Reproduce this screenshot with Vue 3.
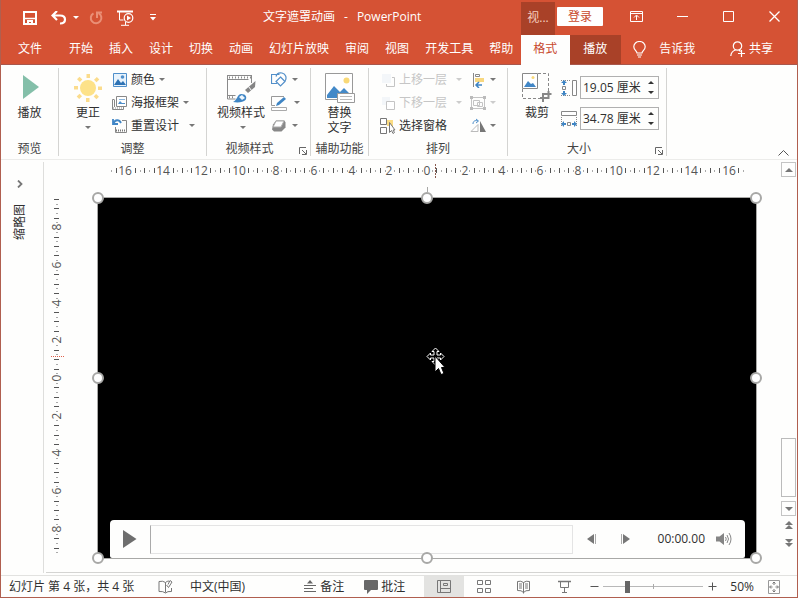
<script setup>
import { ref } from 'vue'

const tabs = ['开始', '插入', '设计', '切换', '动画', '幻灯片放映', '审阅', '视图', '开发工具', '帮助']
const height = ref('19.05 厘米')
const width = ref('34.78 厘米')
const zoom = ref(23)

const UNIT = 18.85

// Half-unit marks are tall, quarter-unit marks are dots; marks under a number are left out.
function ticks(from, to, lastNumber) {
  const list = []
  for (let q = from * 4; q <= to * 4; q++) {
    const value = q / 4
    const number = Math.abs(Math.round(value / 2) * 2)
    const gap = Math.abs(Math.abs(value) - number)
    const covered = number >= 10 ? 0.3 : 0.2
    if (number <= lastNumber && gap < covered) continue
    list.push({ at: Math.round(value * UNIT), tall: q % 2 === 0 })
  }
  return list
}

function numbers(limit) {
  const list = []
  for (let n = -limit; n <= limit; n += 2) list.push({ at: Math.round(n * UNIT), text: Math.abs(n) })
  return list
}

const hTicks = ticks(-16.75, 16.75, 16)
const hNumbers = numbers(16)
const vTicks = ticks(-9.5, 9.25, 8)
const vNumbers = numbers(8)
const handles = ['nw', 'n', 'ne', 'w', 'e', 'sw', 's', 'se']
const rays = [0, 45, 90, 135, 180, 225, 270, 315]
</script>

<template>
  <div class="window">
    <header class="titlebar">
      <div class="quick">
        <button class="q save" aria-label="保存">
          <svg width="14" height="14" viewBox="0 0 14 14"><path d="M1 1h12v12H1z" fill="none" stroke="#fff" stroke-width="2" /><path d="M2 7.500h10" stroke="#fff" stroke-width="1.500" /><path d="M4 9h6v4H8v-2H6v2H4z" fill="#fff" /></svg>
        </button>
        <button class="q undo" aria-label="撤消">
          <svg width="16" height="14" viewBox="0 0 16 14"><path d="M6 0 1.500 4.500 6 9M2 4.500h7c3 0 5 1.500 5 4s-2 4-5 4" fill="none" stroke="#fff" stroke-width="2.200" /></svg>
          <i class="caret light"></i>
        </button>
        <button class="q redo" aria-label="重复">
          <svg width="14" height="14" viewBox="0 0 14 14"><path d="M4.500 2.300A5.300 5.300 0 1 0 9.500 2.200" fill="none" stroke="#ea8f76" stroke-width="2" /><path d="M8 7V1.500h5" fill="none" stroke="#ea8f76" stroke-width="2" /></svg>
        </button>
        <button class="q show" aria-label="从头开始">
          <svg width="17" height="16" viewBox="0 0 17 16"><path d="M0 1.500h16" stroke="#fff" stroke-width="2" /><path d="M2.500 2v8h4M8.500 12v3M4 15.300h8" fill="none" stroke="#fff" /><circle cx="11.500" cy="8" r="4.300" fill="#d55234" stroke="#fff" stroke-width="1.200" /><path d="M10 5.500 14 8l-4 2.500z" fill="#fff" /></svg>
        </button>
        <button class="q" aria-label="自定义快速访问工具栏"><svg width="6" height="7" viewBox="0 0 6 7"><path d="M0 .5h6" stroke="#fff" /><path d="M0 3h6L3 6.500z" fill="#fff" /></svg></button>
      </div>
      <h1><span>文字遮罩动画</span><span>-</span><span>PowerPoint</span></h1>
      <div class="context">视...</div>
      <button class="login">登录</button>
      <div class="winbtns">
        <button aria-label="功能区显示选项"><svg width="13" height="11" viewBox="0 0 13 11"><path d="M.5.500h12v10H.5zM.5 2.500h12M6.500 9V4.500M4 6.500 6.500 4 9 6.500" fill="none" stroke="#fff" /></svg></button>
        <button aria-label="最小化"><svg width="11" height="11" viewBox="0 0 11 11"><path d="M0 5.500h11" stroke="#fff" /></svg></button>
        <button aria-label="最大化"><svg width="11" height="11" viewBox="0 0 11 11"><path d="M.5.500h10v10H.5z" fill="none" stroke="#fff" /></svg></button>
        <button aria-label="关闭"><svg width="11" height="11" viewBox="0 0 11 11"><path d="m.5.500 10 10m0-10-10 10" stroke="#fff" stroke-width="1.300" /></svg></button>
      </div>
    </header>

    <nav class="tabs">
      <button class="tab file">文件</button>
      <button v-for="t in tabs" :key="t" class="tab">{{ t }}</button>
      <button class="tab active">格式</button>
      <button class="tab dark">播放</button>
      <button class="tell">
        <svg width="13" height="17" viewBox="0 0 13 17"><path d="M4 12c0-2-3.200-3-3.200-6.200a5.700 5.300 0 0 1 11.400 0C12.200 9 9 10 9 12zM4 14h5M5 16h3" fill="none" stroke="#fff" stroke-width="1.200" /></svg>
        告诉我
      </button>
      <button class="share">
        <svg width="15" height="16" viewBox="0 0 15 16"><circle cx="7.500" cy="5" r="4.200" fill="none" stroke="#fff" stroke-width="1.200" /><path d="M5.500 9C2.500 10 1 12 .8 15M9 9l1.500 1.500M8 12.500h7M11.500 9v7" fill="none" stroke="#fff" stroke-width="1.200" /></svg>
        共享
      </button>
    </nav>

    <section class="ribbon">
      <div class="group preview">
        <div class="body">
          <button class="big"><svg width="30" height="30" viewBox="0 0 30 30"><path d="M8 2v24l16-12z" fill="#84bfa9" /></svg><span>播放</span></button>
        </div>
        <footer>预览</footer>
      </div>

      <div class="group adjust">
        <div class="body">
          <button class="big">
            <svg width="30" height="30" viewBox="-15 -15 30 30"><circle r="8" fill="#fde289" /><rect v-for="r in rays" :key="r" x="-1.500" y="-14" width="3.500" height="4" fill="#fbdc8c" :transform="`rotate(${r})`" /></svg>
            <span>更正</span><i class="caret"></i>
          </button>
          <div class="rows">
            <button><svg width="16" height="16" viewBox="0 0 16 16"><path d="M1.500 1.500h13v13h-13z" fill="#e8f3fc" stroke="#4f8fca" /><path d="m2 13 4-6 3 4 2-2 3 4z" fill="#2e73b5" /><circle cx="10.500" cy="5" r="1.800" fill="#4f8fca" /></svg>颜色<i class="caret"></i></button>
            <button><svg width="16" height="16" viewBox="0 0 16 16"><path d="M4.500 1.500h10v10h-10z" fill="#fff" stroke="#888" /><path d="m6 9 2-3 2 2h3v1z" fill="#4f8fca" /><path d="M7 4.500h6" stroke="#8ab6dd" /><path d="M2.500 4.500h-2v10h11V12M2.500 5v7" fill="none" stroke="#888" /><path d="M1 13h10" stroke="#888" stroke-dasharray="1 1" /></svg>海报框架<i class="caret"></i></button>
            <button><svg width="16" height="16" viewBox="0 0 16 16"><path d="M10 2.500h4.500v12h-11V9" fill="none" stroke="#888" /><path d="M4 12.500h10" stroke="#777" stroke-width="2" stroke-dasharray="1 1" /><path d="M1 1v5h5M1.500 5.500C3 1.500 7 1 9 5" fill="none" stroke="#4186c6" stroke-width="1.800" /></svg>重置设计<i class="caret far"></i></button>
          </div>
        </div>
        <footer>调整</footer>
      </div>

      <div class="group styles">
        <div class="body">
          <button class="big">
            <svg width="30" height="30" viewBox="0 0 30 30"><path d="M1.500 2.500h24M1.500 6.500h21M1.500 2v24M25.500 2v8M1.500 22.500h8M1.500 26h8" fill="none" stroke="#8a8a8a" /><path d="M3 4.500h22M3 24.300h6" stroke="#8a8a8a" stroke-width="2" stroke-dasharray="1 2" /><path d="m29.500 8-.5 6-7 6-3-3z" fill="#858585" /><path d="m22.500 13.500 3 4" stroke="#fff" /><path d="M7 29c4-1 4-8 8.500-8 4 0 6 3 4 6-2 2-7 3-12.500 2z" fill="#3f85c4" /><path d="m16 22 3 3-3 2-3-3z" fill="#eef6fc" /></svg>
            <span>视频样式</span><i class="caret shift"></i>
          </button>
          <div class="rows icons">
            <button aria-label="视频形状"><svg width="16" height="16" viewBox="0 0 16 16"><path d="M6 11.500H.5v-9h8M5 4.500C6 1 9 .5 11 1c4 1 5 5 3 8" fill="none" stroke="#528fc9" stroke-width="1.200" /><path d="m9.500 5 4.500 4.500-4.500 4.500L5 9.500z" fill="#fff" stroke="#528fc9" stroke-width="1.200" /></svg><i class="caret"></i></button>
            <button aria-label="视频边框"><svg width="16" height="16" viewBox="0 0 16 16"><path d="M13 1.500H.5v9H4" fill="none" stroke="#999" /><path d="M.5 12.500h15v3H.5z" fill="#fff" stroke="#aaa" /><path d="m5 11 1-3 7-6 2 2-7 6z" fill="#3f85c4" /></svg><i class="caret farther"></i></button>
            <button aria-label="视频效果"><svg width="16" height="16" viewBox="0 0 16 16"><path d="M5 2.500h8.500l1 2v5l-4 4H3l-2-2 1-5z" fill="#888" /><path d="M5 3h8l-3 6H2z" fill="#fff" stroke="#aaa" /></svg><i class="caret"></i></button>
          </div>
        </div>
        <footer>视频样式</footer>
        <button class="launch" aria-label="视频样式选项"><svg width="8" height="8" viewBox="0 0 8 8"><path d="M.5 7V.5H7M3 3l4 4M7.500 3v4.500H3" fill="none" stroke="#666" /></svg></button>
      </div>

      <div class="group alt">
        <div class="body">
          <button class="big">
            <svg width="30" height="30" viewBox="0 0 30 30"><path d="M.5.500h27v26H.5z" fill="#fff" stroke="#999" /><circle cx="21.500" cy="7.500" r="3" fill="#f9d978" /><path d="M2 25v-3l7-9 6 6 4-4 7 7v3z" fill="#4389c8" /><path d="M12.500 20.500h17v9h-17z" fill="#fff" stroke="#999" /><path d="M15 23.500h12M15 26.500h12" stroke="#bbb" /></svg>
            <span>替换<br />文字</span>
          </button>
        </div>
        <footer>辅助功能</footer>
      </div>

      <div class="group arrange">
        <div class="body">
          <div class="rows">
            <button class="off" disabled><svg width="16" height="16" viewBox="0 0 16 16"><path d="M2 2h9v9H2z" fill="#f3f6f9" /><path d="M12 5.500h2.500v9h-8V12" fill="none" stroke="#c4c4c4" /></svg>上移一层<i class="caret"></i></button>
            <button class="off" disabled><svg width="16" height="16" viewBox="0 0 16 16"><path d="M2 2h8v8H2z" fill="#f3f6f9" /><path d="M6.500 6.500h8v8h-8z" fill="#fff" stroke="#c4c4c4" /></svg>下移一层<i class="caret"></i></button>
            <button><svg width="16" height="16" viewBox="0 0 16 16"><path d="M.5.500h6v6h-6zM.5 9.500h6v6h-6z" fill="#fff" stroke="#777" /><path d="M7 2h6v6H7z" fill="#fbdc83" /><path d="M9.500 4.500v10l2-2 1.500 3 1.500-1-1.500-2.500H15z" fill="#fff" stroke="#777" /></svg>选择窗格</button>
          </div>
          <div class="rows icons">
            <button aria-label="对齐"><svg width="16" height="16" viewBox="0 0 16 16"><path d="M3.500 1v14M5.500 2.500h4v2h-4z" fill="none" stroke="#888" /><path d="M5 6h9v4H5z" fill="#f8d880" /><path d="M12 13H6m3-3-3 3 3 3" fill="none" stroke="#3f85c4" stroke-width="1.500" /></svg><i class="caret"></i></button>
            <button class="off" disabled aria-label="组合"><svg width="16" height="16" viewBox="0 0 16 16"><path d="M2 2.500h12M2 13.500h12M1.500 3v10M14.500 3v10M3.500 5.500h6v5h-6zM7.500 7.500h5v4h-5z" fill="none" stroke="#c4c4c4" /><path d="M0 1h3v3H0zM13 1h3v3h-3zM0 12h3v3H0zM13 12h3v3h-3z" fill="#bbb" /></svg><i class="caret"></i></button>
            <button aria-label="旋转"><svg width="16" height="16" viewBox="0 0 16 16"><path d="m1 13.500 7-7v7z" fill="#fff" stroke="#bbb" /><path d="M10 3v11h6z" fill="#777" /><path d="M3 6c0-3 2-4 5-3M6 1l2.500 2L6 5" fill="none" stroke="#4f8fca" /></svg><i class="caret"></i></button>
          </div>
        </div>
        <footer>排列</footer>
      </div>

      <div class="group size">
        <div class="body">
          <button class="big">
            <svg width="30" height="30" viewBox="0 0 30 30"><path d="M16 .5h10.500V20M.5 16v9.500H18" fill="none" stroke="#888" stroke-dasharray="3 2" /><path d="M.5.500h15v15H.5z" fill="#fff" stroke="#888" /><path d="m2 14 4-6 3 3 2-1 3 4z" fill="#4186c6" /><circle cx="11" cy="4.500" r="1.500" fill="#f9d978" /><path d="M18 25h8.500V18M21 29v-8h8.500" fill="none" stroke="#888" stroke-width="2" /></svg>
            <span>裁剪</span>
          </button>
          <div class="fields">
            <div class="field">
              <label for="h" aria-label="高度"><svg width="16" height="18" viewBox="0 0 16 18"><path d="M11.500 1.500h4v15h-4z" fill="#fff" stroke="#888" /><path d="M0 1.500h10M0 16.500h10" stroke="#888" stroke-dasharray="1 1" /><path d="M1.500 7.500h3v3h-3z" fill="none" stroke="#888" /><path d="m3 1 3 3H4v2H2V4H0zM3 17l3-3H4v-2H2v2H0z" fill="#3f85c4" /></svg></label>
              <div class="spin"><input id="h" v-model="height" type="text" /><span><button aria-label="增加高度"><i class="up"></i></button><button aria-label="减小高度"><i class="down"></i></button></span></div>
            </div>
            <div class="field">
              <label for="w" aria-label="宽度"><svg width="16" height="18" viewBox="0 0 16 18"><path d="M.5 1.500h15v4H.5z" fill="#fff" stroke="#888" /><path d="M.5 7v10M15.500 7v10" stroke="#888" stroke-dasharray="1 1" /><path d="M6.500 12.500h3v3h-3z" fill="none" stroke="#888" /><path d="m0 14 3-3v2h2v2H3v2zM16 14l-3-3v2h-2v2h2v2z" fill="#3f85c4" /></svg></label>
              <div class="spin"><input id="w" v-model="width" type="text" /><span><button aria-label="增加宽度"><i class="up"></i></button><button aria-label="减小宽度"><i class="down"></i></button></span></div>
            </div>
          </div>
        </div>
        <footer>大小</footer>
        <button class="launch" aria-label="大小选项"><svg width="8" height="8" viewBox="0 0 8 8"><path d="M.5 7V.5H7M3 3l4 4M7.500 3v4.500H3" fill="none" stroke="#666" /></svg></button>
      </div>
      <button class="collapse" aria-label="折叠功能区"><svg width="11" height="6" viewBox="0 0 11 6"><path d="m.5 5.500 5-5 5 5" fill="none" stroke="#555" /></svg></button>
    </section>

    <main class="work">
      <aside class="thumbs">
        <button aria-label="展开缩略图"><svg width="6" height="8" viewBox="0 0 6 8"><path d="m1 .5 3.500 3.500L1 7.500" fill="none" stroke="#777" stroke-width="1.800" /></svg></button>
        <span>缩略图</span>
      </aside>
      <div class="editor">
        <div class="hruler">
          <svg width="660" height="20" viewBox="-330 0 660 20">
            <rect v-for="t in hTicks" :key="t.at" :x="t.at" :y="t.tall ? 8 : 10" width="1" :height="t.tall ? 5 : 2" :fill="t.tall ? '#555' : '#aaa'" />
            <text v-for="n in hNumbers" :key="n.at" :x="n.at" y="15" text-anchor="middle">{{ n.text }}</text>
            <path d="M8.500 4v15" stroke="#8a5b50" stroke-dasharray="2 1" />
          </svg>
        </div>
        <div class="vruler">
          <svg width="20" height="362" viewBox="0 -181 20 362">
            <rect v-for="t in vTicks" :key="t.at" :x="t.tall ? 6 : 8" :y="t.at" :width="t.tall ? 5 : 2" height="1" :fill="t.tall ? '#555' : '#aaa'" />
            <text v-for="n in vNumbers" :key="n.at" :transform="`translate(13 ${n.at}) rotate(-90)`" text-anchor="middle">{{ n.text }}</text>
            <path d="M3 -21.500h13" stroke="#e0604a" stroke-dasharray="1 1" />
          </svg>
        </div>
        <div class="canvas">
          <div class="video">
            <i v-for="h in handles" :key="h" class="handle" :class="h"></i>
            <svg class="pointer" width="20" height="30" viewBox="0 0 20 30"><path d="m9.500 1 3.500 3.500h-2v3.500h3.500V6l3.500 3.500-3.500 3.500v-2H11v3.500h2L9.500 18 6 14.500h2V11H4.500v2L1 9.500 4.500 6v2H8V4.500H6z" fill="#000" stroke="#fff" /><path d="M9 9v16l3.500-3.500 2.500 6 3-1-2.500-6H19z" fill="#fff" stroke="#000" /></svg>
            <div class="player">
              <button class="play" aria-label="播放"><svg width="14" height="18" viewBox="0 0 14 18"><path d="M0 0v18l13.500-9z" fill="#6e6e6e" /></svg></button>
              <div class="track"></div>
              <button class="step" aria-label="后退"><svg width="10" height="10" viewBox="0 0 10 10"><path d="M7 0v10L0 5z" fill="#777" /><path d="M8.500 0v10" stroke="#aaa" /></svg></button>
              <button class="step next" aria-label="前进"><svg width="10" height="10" viewBox="0 0 10 10"><path d="M3 0v10l7-5z" fill="#777" /><path d="M1.500 0v10" stroke="#aaa" /></svg></button>
              <time>00:00.00</time>
              <button aria-label="静音"><svg width="16" height="12" viewBox="0 0 16 12"><path d="M0 3.500h3.500L8 0v12L3.500 8.500H0z" fill="#858585" /><path d="M9.500 4q1.500 2 0 4M11 2q3 4 0 8M13 0q4 6 0 12" fill="none" stroke="#888" /></svg></button>
            </div>
          </div>
        </div>
      </div>
      <div class="scroll">
        <button class="box" aria-label="向上滚动"><i class="tri-up"></i></button>
        <div class="rail"><div class="thumb"></div></div>
        <button class="box" aria-label="向下滚动"><i class="tri-down"></i></button>
        <button class="page" aria-label="上一张幻灯片"><i class="tri-up"></i><i class="tri-up"></i></button>
        <button class="page" aria-label="下一张幻灯片"><i class="tri-down"></i><i class="tri-down"></i></button>
      </div>
    </main>

    <footer class="status">
      <span class="count">幻灯片 第 4 张，共 4 张</span>
      <button class="spell" aria-label="拼写检查"><svg width="15" height="14" viewBox="0 0 15 14"><path d="M7.500 12.500V2.500Q5 .5 1 1.500v10q4-.5 6.500 1.500M7.500 2.500Q9 1 11 1M13.500 8v3.500q-4-.5-6 1.500" fill="none" stroke="#777" /><path d="m8.500 5 2 2.500L14 2l-2-1.500-2 4" fill="none" stroke="#777" /></svg></button>
      <span class="lang">中文(中国)</span>
      <button class="note"><svg width="12" height="13" viewBox="0 0 12 13"><path d="M0 5.500h12M0 8.500h9M0 11.500h12" stroke="#666" /><path d="m6 0 3 3.500H3z" fill="#666" /></svg>备注</button>
      <button class="comment"><svg width="14" height="14" viewBox="0 0 14 14"><path d="M1 0h12q1 0 1 1v8q0 1-1 1H7l-4 4v-4H1q-1 0-1-1V1q0-1 1-1z" fill="#686868" /></svg>批注</button>
      <div class="views">
        <button class="on" aria-label="普通视图"><svg width="15" height="13" viewBox="0 0 15 13"><path d="M.5.500h13v12H.5zM3.500.5v12M3.500 8.500h10M6.500 3.500h4v2h-4z" fill="none" stroke="#777" /></svg></button>
        <button aria-label="幻灯片浏览"><svg width="14" height="13" viewBox="0 0 14 13"><path d="M.5.500h5v4h-5zM8.500.5h5v4h-5zM.5 8.500h5v4h-5zM8.500 8.500h5v4h-5z" fill="none" stroke="#777" /></svg></button>
        <button aria-label="阅读视图"><svg width="14" height="14" viewBox="0 0 14 14"><path d="M6.500 2.500Q4 .5.500 1.500v9q4-.5 6 2 2-2.500 6-2v-9Q9 .5 6.500 2.500v11" fill="none" stroke="#777" /><path d="M2 4h3M2 6h3M2 8h3M8 4h3M8 6h3M8 8h3" stroke="#777" /></svg></button>
        <button aria-label="幻灯片放映"><svg width="13" height="13" viewBox="0 0 13 13"><path d="M0 1.500h13" stroke="#777" stroke-width="1.500" /><path d="M2.500 2v5.500h8V2M6.500 7.500V12M4 12.500h5" fill="none" stroke="#777" /></svg></button>
      </div>
      <div class="zoomer">
        <button aria-label="缩小"><svg width="9" height="9" viewBox="0 0 9 9"><path d="M.5 4.500h8" stroke="#555" /></svg></button>
        <input v-model="zoom" type="range" min="0" max="100" aria-label="显示比例" />
        <button aria-label="放大"><svg width="9" height="9" viewBox="0 0 9 9"><path d="M.5 4.500h8M4.500.5v8" stroke="#555" /></svg></button>
        <span>50%</span>
        <button aria-label="适应窗口"><svg width="12" height="14" viewBox="0 0 12 14"><path d="M.5.500h11v13H.5z" fill="none" stroke="#999" /><path d="M6 2v3M6 9v3M2 7h2.500M7.500 7H10M4.500 3.500 6 2l1.500 1.500M4.500 10.500 6 12l1.500-1.500M3 5.500 1.500 7 3 8.500M9 5.500 10.500 7 9 8.500" fill="none" stroke="#777" /></svg></button>
      </div>
    </footer>
  </div>
</template>

<style>
body { margin: 0; }
</style>

<style scoped>
* { box-sizing: border-box; }
button, input { font: inherit; color: inherit; border: 0; background: none; padding: 0; margin: 0; }
button { display: flex; align-items: center; white-space: nowrap; flex: none; }
svg { display: block; flex: none; }
i { display: block; flex: none; }

.window { height: 100vh; min-height: 480px; display: flex; flex-direction: column; background: #fefefd; color: #303030; border: solid #b05f4f; border-width: 0 1px 1px; font: 12px/16px "Open Sans", "Noto Sans CJK SC", sans-serif; overflow: hidden; }
.caret { width: 0; height: 0; border: 3px solid transparent; border-top-color: #777; border-bottom: 0; }
.caret.light { border-top-color: #fff; }

.titlebar { display: flex; height: 35px; background: #d55234; color: #fff; flex: none; }
.quick { display: flex; align-items: center; padding-left: 22px; gap: 14px; width: 262px; flex: none; }
.undo { gap: 6px; }
.undo { margin-right: -4px; }
.show { margin-right: 2px; }
h1 { display: flex; gap: 9px; font: inherit; line-height: 34px; margin: 0; flex: 1; white-space: nowrap; }
.context { background: #a94128; width: 34px; margin-top: 2px; line-height: 31px; text-align: center; color: #f5cdbf; }
.login { background: #fff; color: #c8492d; width: 46px; height: 19px; margin: 7px 10px 0 2px; justify-content: center; border-radius: 1px; }
.winbtns { display: flex; }
.winbtns button { width: 46px; height: 32px; justify-content: center; }

.tabs { display: flex; height: 30px; background: #d55234; color: #fff; flex: none; border-bottom: 1px solid #a9574c; }
.tab { height: 29px; padding: 0 8px 2px; }
.file { width: 60px; justify-content: center; padding: 0 10px 2px 8px; }
.active { height: 30px; background: #fefefd; color: #c8492d; padding: 0 13px 3px 12px; }
.dark { background: #a94128; padding: 0 14px 2px 13px; }
.tell { margin-left: 12px; gap: 13px; }
.share { margin-left: auto; margin-right: 24px; gap: 4px; }
.tell, .share { height: 28px; }

.ribbon { display: flex; flex: none; padding: 3px 0; border-bottom: 1px solid #ececea; }
.group { position: relative; display: flex; flex-direction: column; height: 88px; border-right: 1px solid #d4d4d2; }
.body { display: flex; flex: 1; }
.group footer { text-align: center; line-height: 14px; color: #444; }
.big { flex-direction: column; padding-top: 5px; line-height: 14px; height: 70px; }
.big svg { margin-bottom: 3px; }
.big .caret { margin-top: 6px; }
.big .shift { margin-left: 4px; }
.rows { display: flex; flex-direction: column; }
.rows button { height: 23px; gap: 3px; }
.rows .caret { margin-left: 1px; }
.rows .far { margin-left: 7px; }
.icons button { gap: 4px; }
.rows .caret.farther { margin-left: 3px; }
.off { color: #c6c6c6; }
.off .caret { border-top-color: #ccc; }
.launch { position: absolute; right: 3px; bottom: 1px; }

.preview { width: 58px; }
.preview .body { justify-content: center; }
.adjust { width: 148px; }
.adjust .body { padding-left: 14px; gap: 9px; }
.styles { width: 104px; }
.styles .body { padding-left: 10px; gap: 6px; }
.styles footer { padding-right: 18px; }
.alt { width: 58px; }
.alt .body { justify-content: center; }
.alt .big { line-height: 15px; }
.alt .big svg { margin-bottom: 2px; }
.alt footer { white-space: nowrap; }
.arrange { width: 139px; }
.arrange .body { padding-left: 11px; gap: 8px; }
.arrange .off .caret { margin-left: 6px; }
.arrange .icons .off .caret { margin-left: 1px; }
.arrange .icons button { gap: 3px; }
.size { width: 159px; }
.size .body { padding-left: 14px; gap: 9px; }
.size footer { padding-right: 16px; }
.fields { display: flex; flex-direction: column; padding-top: 8px; gap: 8px; }
.field { display: flex; align-items: center; gap: 3px; }
.spin { display: flex; width: 79px; height: 23px; border: 1px solid #b0b0b0; }
.spin input { flex: 1; width: 20px; min-width: 0; padding-left: 2px; outline: 0; }
.spin span { width: 15px; display: flex; flex-direction: column; }
.spin span button { flex: 1; justify-content: center; }
.up, .down { border: 3px solid transparent; }
.up { border-bottom-color: #333; border-top: 0; }
.down { border-top-color: #333; border-bottom: 0; }
.collapse { margin: auto 8px 0 auto; }

.work { flex: 1; min-height: 0; display: flex; }
.thumbs { width: 43px; display: flex; flex-direction: column; align-items: center; padding: 18px 4px 0 0; gap: 16px; border-right: 1px solid #dededc; margin: 2px 0 0; }
.thumbs span { writing-mode: vertical-rl; text-orientation: sideways; transform: rotate(180deg); }
.editor { flex: 1; min-width: 0; display: grid; grid-template: 20px 1fr / 24px 1fr; border-bottom: 1px solid #d4d4d2; margin-left: 2px; }
.hruler { grid-column: 2; display: flex; justify-content: center; padding: 0 23px 0 27px; overflow: hidden; }
.hruler svg, .vruler svg { overflow: visible; }
.hruler text, .vruler text { font-size: 12px; fill: #555; }
.vruler { display: flex; align-items: center; justify-content: center; padding: 17px 0 13px; }
.canvas { display: flex; padding: 17px 23px 13px 27px; min-width: 0; }
.video { position: relative; flex: 1; display: flex; align-items: flex-end; background: #000; border: 1px solid #a8a8a6; padding: 0 11px 0 12px; min-width: 0; }
.handle { position: absolute; width: 12px; height: 12px; border: 2px solid #a8a8a6; border-radius: 50%; background: #fff; transform: translate(-50%, -50%); z-index: 1; }
.nw, .n, .ne { top: 0; }
.w, .e { top: 50%; }
.sw, .s, .se { top: 100%; }
.nw, .w, .sw { left: 0; }
.n, .s { left: 50%; }
.ne, .e, .se { left: 100%; }
.n::before { content: ""; position: absolute; left: 4px; top: -7px; width: 1px; height: 5px; background: #a8a8a6; }
.pointer { position: absolute; left: calc(50% - 1px); top: calc(50% - 31px); }
.player { flex: 1; display: flex; align-items: center; height: 38px; background: #fefefd; border-radius: 4px 4px 2px 2px; padding: 0 13px; min-width: 0; }
.track { flex: 1; height: 29px; border: 1px solid #e4e4e4; border-left-color: #aaa; margin: 0 14px 0 13px; }
.next { margin: 0 28px 0 23px; }
.player time { margin-right: 11px; }

.scroll { width: 17px; display: flex; flex-direction: column; align-items: center; padding: 2px 0 26px; }
.box { width: 15px; height: 15px; border: 1px solid #c4c4c4; justify-content: center; }
.rail { flex: 1; display: flex; align-items: flex-end; padding-bottom: 4px; }
.thumb { width: 15px; height: 59px; border: 1px solid #bbb; }
.tri-up, .tri-down { border: 4px solid transparent; }
.tri-up { border-top: 0; border-bottom-color: #777; }
.tri-down { border-bottom: 0; border-top-color: #777; }
.page { flex-direction: column; margin-top: 5px; }
.page + .page { margin-top: 10px; }

.status { flex: none; display: flex; align-items: center; height: 22px; margin-top: 2px; border-top: 1px solid #e2e2e0; white-space: nowrap; }
.count { padding-left: 8px; width: 157px; flex: none; }
.lang { margin-left: 17px; }
.note { margin-left: auto; gap: 4px; }
.comment { margin: 0 19px 0 20px; gap: 3px; }
.views { display: flex; align-self: stretch; }
.views button { width: 40px; justify-content: center; }
.views .on { background: #e3e3e1; }
.zoomer { display: flex; align-items: center; padding: 0 17px 0 6px; }
.zoomer input { appearance: none; width: 100px; height: 13px; margin: 0 5px 0 4px; background: linear-gradient(#aaa, #aaa) center / 1px 5px no-repeat, linear-gradient(#b8b8b8, #b8b8b8) center / 100% 1px no-repeat; }
.zoomer input::-webkit-slider-thumb { appearance: none; width: 5px; height: 12px; background: #666; }
.zoomer span { margin: 0 14px 0 13px; }
</style>
